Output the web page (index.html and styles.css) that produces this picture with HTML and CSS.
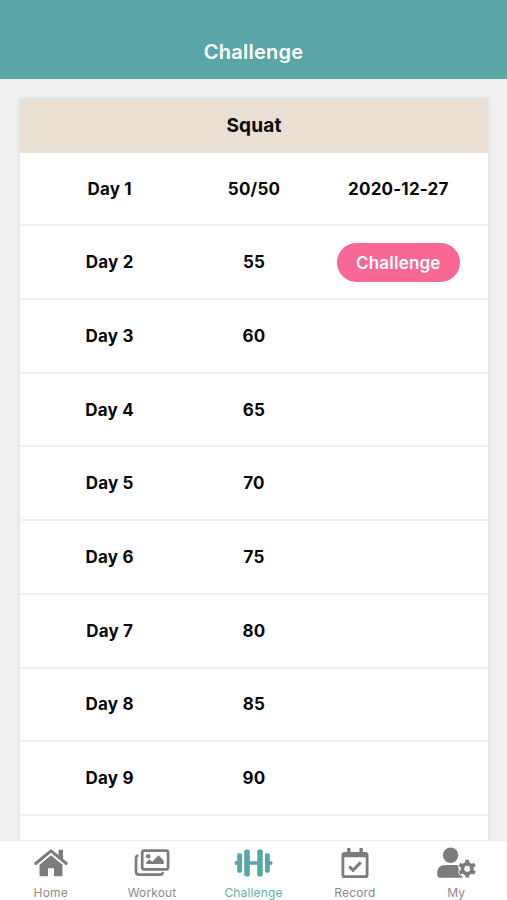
FILE: index.html
```html
<!DOCTYPE html>
<html lang="en">
<head>
<meta charset="utf-8">
<title>Challenge</title>
<link rel="stylesheet" href="styles.css">
</head>
<body>
<div class="app">
  <header class="topbar"><h1><span>Challenge</span></h1></header>
  <main class="content">
    <section class="card">
      <h2><span>Squat</span></h2>
      <div class="row"><span>Day 1</span><span>50/50</span><span>2020-12-27</span></div>
      <div class="row"><span>Day 2</span><span>55</span><button class="go">Challenge</button></div>
      <div class="row"><span>Day 3</span><span>60</span></div>
      <div class="row"><span>Day 4</span><span>65</span></div>
      <div class="row"><span>Day 5</span><span>70</span></div>
      <div class="row"><span>Day 6</span><span>75</span></div>
      <div class="row"><span>Day 7</span><span>80</span></div>
      <div class="row"><span>Day 8</span><span>85</span></div>
      <div class="row"><span>Day 9</span><span>90</span></div>
      <div class="row"></div>
    </section>
  </main>
  <nav class="tabs">
    <a class="tab">
      <svg width="40" height="34" viewBox="0 0 40 34">
        <path d="M4.700 16.500 20 3.900l15.300 12.600" fill="none" stroke="currentColor" stroke-width="3" stroke-linecap="round" stroke-linejoin="round"/>
        <path d="M27.600 2.700h4.400v9.800l-4.400-3.600z"/>
        <path d="M20 8.200 31.500 17.700V27.800q0 1.500-1.500 1.500h-7v-8h-6v8h-7Q8.500 29.300 8.500 27.800V17.700z"/>
      </svg>
      <span>Home</span>
    </a>
    <a class="tab">
      <svg width="40" height="34" viewBox="0 0 40 34">
        <g fill="none" stroke="currentColor" stroke-width="2.700" stroke-linecap="round">
          <rect x="10.200" y="3.700" width="25.900" height="18.600" rx="2"/>
          <path d="M5.200 8.900q-1.200.4-1.200 2v13.500q0 3.200 3.200 3.200h21.300q1.800 0 2.200-1.400"/>
        </g>
        <circle cx="16.200" cy="9.300" r="2.200"/>
        <path d="M14.300 17v-1.800l3-3 2.900 2.600L26.600 8.300l5.200 5.400V17z"/>
      </svg>
      <span>Workout</span>
    </a>
    <a class="tab active">
      <svg width="40" height="34" viewBox="0 0 40 34">
        <rect x="11.200" y="2.500" width="5.600" height="27" rx="1.700"/>
        <rect x="24.200" y="2.500" width="5.600" height="27" rx="1.700"/>
        <rect x="4.200" y="6.200" width="4.900" height="19.600" rx="1.700"/>
        <rect x="31.900" y="6.200" width="4.900" height="19.600" rx="1.700"/>
        <path d="M16 14.200h9v3.600h-9zM5 13.900v4.200H3q-1.600-.5-1.600-2.100T3 13.900zM36 13.900v4.200h2q1.600-.5 1.600-2.100T38 13.900z"/>
      </svg>
      <span>Challenge</span>
    </a>
    <a class="tab">
      <svg width="40" height="34" viewBox="0 0 40 34">
        <path fill-rule="evenodd" d="M9.700 4.900h20.600q3.200 0 3.200 3.200v19.800q0 3.200-3.200 3.200H9.700q-3.200 0-3.200-3.200V8.100q0-3.200 3.200-3.200zM9.300 10.300v17.100q0 .9.900.9h19.600q.9 0 .9-.9V10.300z"/>
        <path d="M12.100 5.300V1.700q0-.7.700-.7h2.100q.7 0 .7.700v3.600zM24.400 5.300V1.700q0-.7.700-.7h2.100q.7 0 .7.700v3.600z"/>
        <path d="m14.300 19.500 3.700 3.900 7.800-8" fill="none" stroke="currentColor" stroke-width="3"/>
      </svg>
      <span>Record</span>
    </a>
    <a class="tab">
      <svg width="40" height="34" viewBox="0 0 40 34">
        <circle cx="14.600" cy="8.300" r="7.700"/>
        <path d="M9.500 18h10.200q1.500 0 3 .7l-.8 1.700 1.500 1.800-1.500 2.700 2.300 3.700 2.200.2v2H4.300q-3 0-3-3v-2.200Q1.300 18 9.500 18z"/>
        <circle cx="31.200" cy="21.700" r="4.800" fill="none" stroke="currentColor" stroke-width="3.700"/>
        <path d="M31.200 12.800v4M31.200 26.600v4M23.500 17.300l3.500 2M35.400 24.100l3.500 2M23.500 26.100l3.500-2M35.400 19.300l3.500-2" stroke="currentColor" stroke-width="3.800"/>
      </svg>
      <span>My</span>
    </a>
  </nav>
</div>
</body>
</html>
```
FILE: styles.css
```css
* { box-sizing: border-box; }
body { margin: 0; font-family: Inter, "Liberation Sans", sans-serif; background: #f0f0f0; color: #080808; }
.app { height: 900px; display: flex; flex-direction: column; overflow: hidden; }
.topbar { flex: 0 0 79px; background: #5aa6a7; color: #fff; padding-top: 38px; }
h1, h2 { margin: 0; text-align: center; }
h1 { font-size: 20px; line-height: 29px; font-weight: 600; letter-spacing: .25px; }
.content { flex: 1; min-height: 0; overflow: hidden; padding: 20px 19px 0 20px; }
.card { background: #fff; box-shadow: 0 0 3px 1px #dcdfe0; }
h2 { height: 53.700px; background: #e9dfd3; font-size: 19px; line-height: 54px; font-weight: 700; letter-spacing: .2px; }
.row { height: 73.7px; border-bottom: 2px solid #f0f0f0; padding: 0 17.500px; display: grid; grid-template-columns: repeat(3, 1fr); align-items: center; justify-items: center; font-size: 17px; font-weight: 700; letter-spacing: .2px; }
.go { width: 123px; height: 39px; border: 0; border-radius: 20px; padding: 1px 0 0; background: #f96895; color: #fff; font: 600 17px Inter, sans-serif; letter-spacing: .2px; }
.tabs { flex: 0 0 60px; border-top: 1px solid #ececec; background: #fff; display: grid; grid-template-columns: repeat(5, 1fr); color: #7c7c7c; }
.tab { display: flex; flex-direction: column; align-items: center; padding-top: 6px; font-size: 12px; line-height: 14px; letter-spacing: .15px; }
.tab svg { display: block; fill: currentColor; }
.tab span { margin-top: 5px; color: #8b8b8b; }
.active { color: #5aa6a7; }
.tab.active span { color: #5fb0a7; }
```
